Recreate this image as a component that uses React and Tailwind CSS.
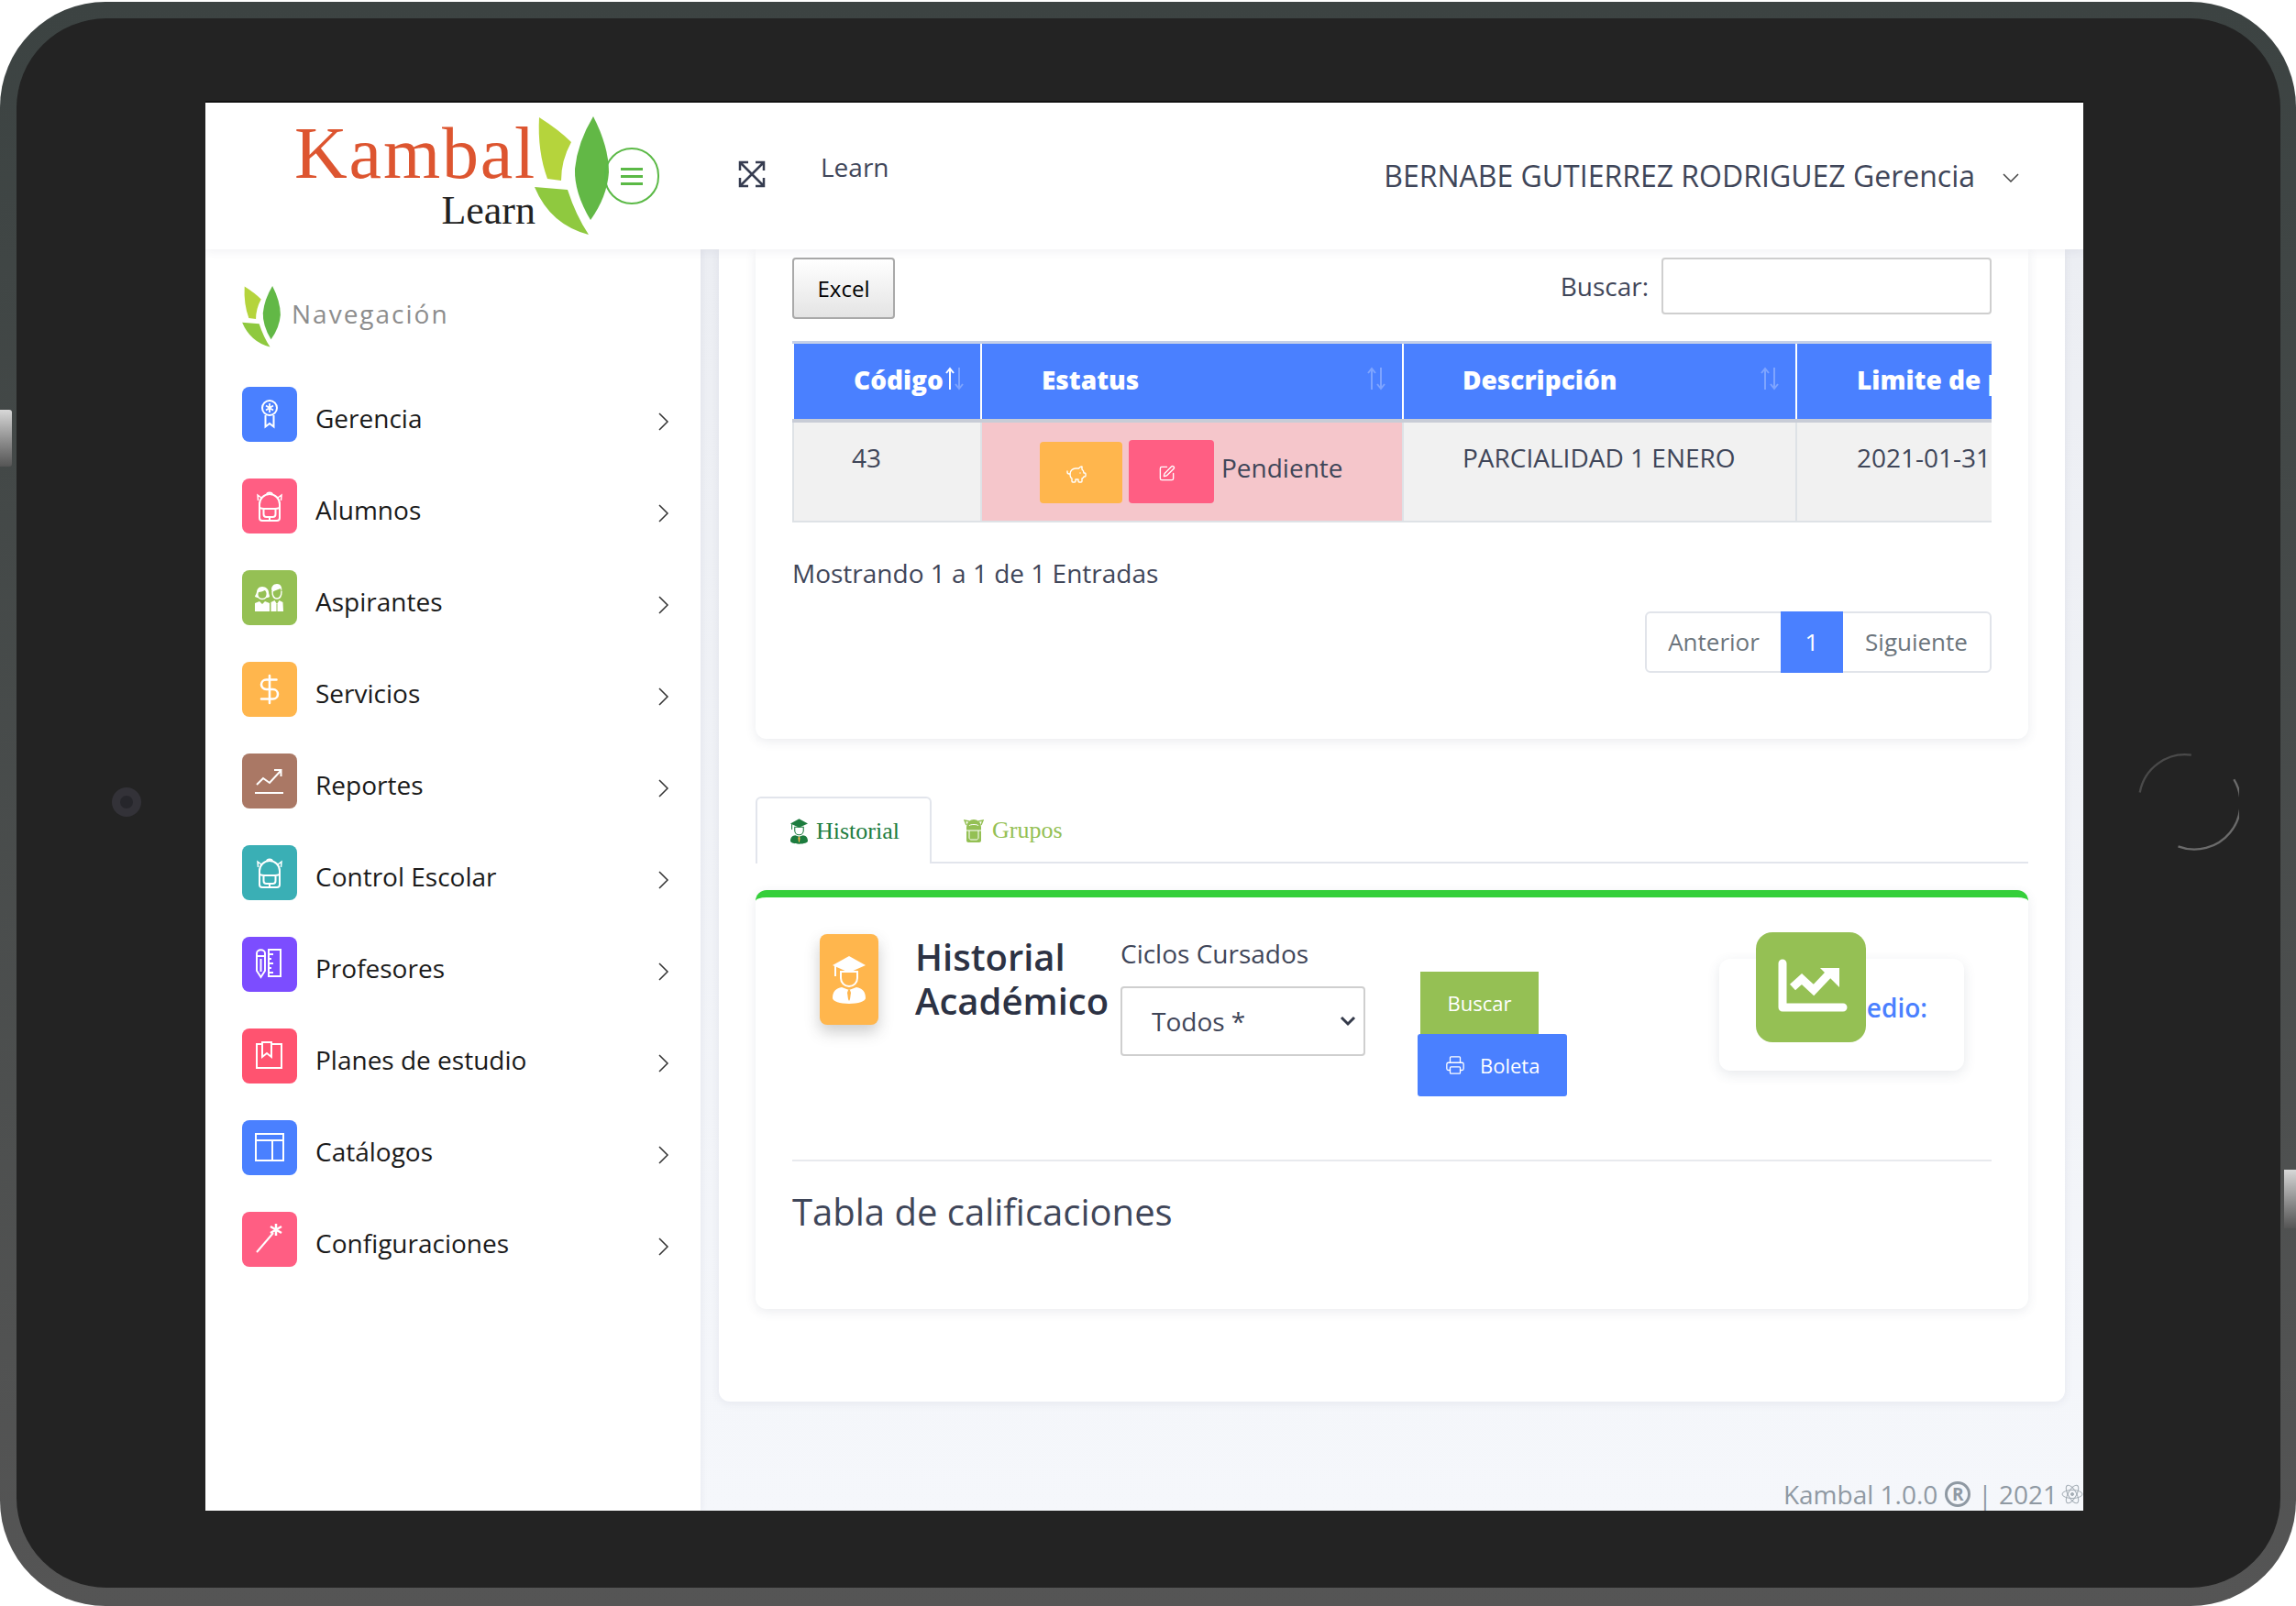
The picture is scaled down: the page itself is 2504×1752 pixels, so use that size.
import React from "react";
import { DollarSign, PiggyBank, SquarePen, Printer } from "lucide-react";

const Leaves = ({ className }) => (
  <svg viewBox="583 127 81 130" className={className}>
    <path d="M588 128 Q610 142 623 155 Q612 175 612 197 L597 195 Q586 165 588 128Z" fill="#b5d43c" />
    <path d="M647 127 Q664 160 664 188 Q662 215 644 240 Q626 210 627 184 Q630 155 647 127Z" fill="#62b846" />
    <path d="M583 204 L619 207 Q628 235 642 256 Q600 245 583 204Z" fill="#8fc93f" />
  </svg>
);

const Medal = () => (
  <svg viewBox="0 0 60 60" className="w-[60px] h-[60px]" fill="none" stroke="white" strokeWidth="2">
    <circle cx="30" cy="23" r="8" />
    <path d="M30 18v10M26 20.500l8 5M34 20.500l-8 5" strokeWidth="1.800" />
    <path d="M25.500 31v12.500l4.500-3.500 4.500 3.500V31" />
  </svg>
);

const Backpack = () => (
  <svg viewBox="0 0 60 60" className="w-[60px] h-[60px]" fill="none" stroke="white" strokeWidth="2">
    <path d="M19 43V28c0-6 5-11 11-11s11 5 11 11v15c0 2-1 3-3 3H22c-2 0-3-1-3-3Z" />
    <path d="M19 32c3 1 5 1 5 1h12s2 0 5-1M23.500 33v6c0 2 1 3 3 3h7c2 0 3-1 3-3v-6M30 46v-4" />
    <path d="M21 21l-4-3 .5 6M39 21l4-3-.5 6M27 17c0-2.500 6-2.500 6 0" strokeWidth="1.500" />
  </svg>
);

const People = () => (
  <svg viewBox="0 0 60 60" className="w-[60px] h-[60px]" fill="white">
    <path d="M22 18c-4 0-6 3-6 6 0 2-2 3-2 5 2 1 3 1 4 1-1-2-1-4 0-6 2 0 6-1 8-3 1 3 1 6 0 9 1 0 3 0 4-1 0-2-1-3-1-5 0-3-3-6-7-6Z" />
    <circle cx="22" cy="26" r="5.500" fill="none" stroke="white" strokeWidth="1.400" />
    <path d="M14 45V36l5-2 3 3 3-3 5 2v9Z" />
    <path d="M38 15c-4 0-6 3-6 6l1 3c2-2 7-3 9-4l1 4c1-4 0-9-5-9Z" />
    <path d="M33 23c0 5 2 8 5 8s5-3 5-8" fill="none" stroke="white" strokeWidth="1.400" />
    <path d="M31.500 45V35l4-2 2.500 4 2.500-4 4 2 .5 10Z" />
    <path d="M38 37v8" stroke="#95c054" strokeWidth="1" />
  </svg>
);

const Dollar = () => <DollarSign size={36} strokeWidth={1.7} color="white" />;

const Trend = () => (
  <svg viewBox="0 0 60 60" className="w-[60px] h-[60px]" fill="none" stroke="white" strokeWidth="2">
    <path d="M16 34l7-7 7 5 12-13M35 18h7.500v7" />
    <path d="M14 43h31" />
  </svg>
);

const Pencil = () => (
  <svg viewBox="0 0 60 60" className="w-[60px] h-[60px]" fill="none" stroke="white" strokeWidth="2">
    <path d="M16 18c0-5 9-5 9 0v19l-4.500 7-4.500-7ZM16 21h9M20.500 24v14" />
    <path d="M29 14h13v29H29ZM29 19h5M29 24h3M29 29h5M29 34h3M29 39h5" />
  </svg>
);

const Book = () => (
  <svg viewBox="0 0 60 60" className="w-[60px] h-[60px]" fill="none" stroke="white" strokeWidth="2">
    <path d="M22 17h-6v26h27V17h-11" />
    <path d="M22 15h10v16l-5-4-5 4Z" />
  </svg>
);

const Layout = () => (
  <svg viewBox="0 0 60 60" className="w-[60px] h-[60px]" fill="none" stroke="white" strokeWidth="2">
    <path d="M15 15h30v29H15ZM15 22h30M33 22v22" />
  </svg>
);

const Wand = () => (
  <svg viewBox="0 0 60 60" className="w-[60px] h-[60px]" fill="none" stroke="white" strokeWidth="2">
    <path d="M16 44l18-21" />
    <path d="M37 13v13M31 16l12 7M43 16l-12 7" strokeWidth="2.500" />
  </svg>
);

const Student = ({ className }) => (
  <svg viewBox="0 0 36 52" className={className} fill="currentColor">
    <path d="M18 0l18 10-18 8L0 10Z" />
    <rect x="2" y="11" width="2" height="11" />
    <path d="M9 17h18v7c0 5-4 9-9 9s-9-4-9-9Z" fill="none" stroke="currentColor" strokeWidth="2" />
    <path d="M10 34l8 3 8-3c6 1 10 4 10 12 0 3-8 6-18 6S0 49 0 46c0-8 4-11 10-12Z" />
    <path d="M17 37h2l1 3-1 7-1 2-1-2-1-7Z" fill="#ffb64d" />
  </svg>
);

const menu = [
  { label: "Gerencia", bg: "bg-[#4a80ff]", Icon: Medal },
  { label: "Alumnos", bg: "bg-[#ff5e83]", Icon: Backpack },
  { label: "Aspirantes", bg: "bg-[#95c054]", Icon: People },
  { label: "Servicios", bg: "bg-[#ffb64d]", Icon: Dollar },
  { label: "Reportes", bg: "bg-[#aa7865]", Icon: Trend },
  { label: "Control Escolar", bg: "bg-[#3aafb5]", Icon: Backpack },
  { label: "Profesores", bg: "bg-[#7c4dff]", Icon: Pencil },
  { label: "Planes de estudio", bg: "bg-[#ff5370]", Icon: Book },
  { label: "Catálogos", bg: "bg-[#4a80ff]", Icon: Layout },
  { label: "Configuraciones", bg: "bg-[#ff5e83]", Icon: Wand },
];

const SortArrows = ({ active }) => (
  <svg viewBox="0 0 22 26" className="absolute top-[25px] right-[17px] w-[22px] h-[26px]" fill="none" strokeWidth="2">
    <path d="M6 25V2M2 7l4-5 4 5" stroke={active ? "#ffffff" : "#7ea4ff"} />
    <path d="M16 1v23M12 19l4 5 4-5" stroke="#7ea4ff" />
  </svg>
);

const Sidebar = () => (
  <aside className="w-[540px] shrink-0 bg-white pl-[40px] relative z-10 shadow-[2px_0_6px_rgba(60,70,100,0.06)]">
    <div className="flex items-center h-[67px] mt-[40px] mb-[43px]">
      <Leaves className="w-[42px] h-[67px]" />
      <span className="ml-[12px] -mt-[7px] text-[28px] tracking-[2px] text-[#8d8d8d]">Navegación</span>
    </div>
    <ul className="flex flex-col gap-[40px]">
      {menu.map(({ label, bg, Icon }) => (
        <li key={label} className="flex items-center h-[60px]">
          <div className={`w-[60px] h-[60px] rounded-[8px] flex items-center justify-center ${bg}`}>
            <Icon />
          </div>
          <span className="ml-[20px] mt-[7px] text-[28px] text-[#1a1a1a]">{label}</span>
          <svg viewBox="0 0 12 20" className="ml-auto mr-[34px] mt-[16px] w-[12px] h-[20px]" fill="none" stroke="#333" strokeWidth="1.500">
            <path d="M1 1l9 9-9 9" />
          </svg>
        </li>
      ))}
    </ul>
  </aside>
);

const Header = () => (
  <header className="h-[160px] shrink-0 bg-white flex items-center relative z-20 shadow-[0_2px_10px_rgba(60,70,100,0.08)]">
    <div className="w-[360px] pl-[97px] self-start pt-[14px] text-right shrink-0" style={{ fontFamily: "'Liberation Serif', serif" }}>
      <div className="text-[80px] leading-[82px] tracking-[1.8px] text-[#dd5530] font-normal">Kambal</div>
      <div className="text-[44px] leading-[44px] text-[#222]">Learn</div>
    </div>
    <Leaves className="w-[81px] h-[130px] -ml-px self-start mt-[15px] shrink-0" />
    <button className="w-[60px] h-[62px] -ml-[5px] rounded-full border-2 border-[#5bb946] flex flex-col items-center justify-center gap-[5px] shrink-0">
      <span className="block w-[24px] h-[3px] bg-[#5bb946]" />
      <span className="block w-[24px] h-[3px] bg-[#5bb946]" />
      <span className="block w-[24px] h-[3px] bg-[#5bb946]" />
    </button>
    <svg viewBox="0 0 30 30" className="ml-[86px] -mt-[4px] w-[30px] h-[30px] shrink-0" fill="none" stroke="#363c50" strokeWidth="2.500">
      <path d="M2 11V2h9M19 2h9v9M28 19v9h-9M11 28H2v-9M2 2l26 26M28 2L2 28" />
    </svg>
    <span className="ml-[60px] -mt-[20px] text-[28px] text-[#3f4659]">Learn</span>
    <span className="ml-auto text-[32px] text-[#3f4659]">BERNABE GUTIERREZ RODRIGUEZ Gerencia</span>
    <svg viewBox="0 0 18 10" className="ml-[30px] mr-[70px] mt-[4px] w-[18px] h-[10px] shrink-0" fill="none" stroke="#444" strokeWidth="1.500">
      <path d="M1 1l8 8 8-8" />
    </svg>
  </header>
);

const TopCard = () => (
  <section className="h-[534px] bg-white rounded-b-[12px] px-[40px] pt-[9px] shadow-[0_3px_12px_rgba(60,70,100,0.1)]">
    <div className="flex items-start justify-between">
      <button className="w-[112px] h-[67px] border-2 border-[#a9a9a9] rounded-[4px] bg-gradient-to-b from-white to-[#e4e4e4] text-[24px] text-black">
        Excel
      </button>
      <label className="flex items-center h-[62px] text-[28px] text-[#3f4659]">
        Buscar:
        <input className="ml-[14px] w-[360px] h-[62px] border-2 border-[#cfcfcf] rounded-[4px] bg-white" />
      </label>
    </div>
    <div className="mt-[24px] overflow-hidden">
      <table className="w-[1500px] table-fixed border-collapse text-[28px] text-[#3f4659]">
        <colgroup>
          <col className="w-[205px]" />
          <col className="w-[460px]" />
          <col className="w-[429px]" />
          <col />
        </colgroup>
        <thead>
          <tr className="h-[85px] bg-[#4a80ff] text-white border-t-[3px] border-t-[#c5d0e8] border-b-[4px] border-b-[#c8ccd6]">
            <th className="relative text-left font-extrabold pl-[65px] pb-[3px] whitespace-nowrap border-2 border-y-0 border-white/80">
              Código
              <SortArrows active />
            </th>
            <th className="relative text-left font-extrabold pl-[65px] pb-[3px] border-2 border-y-0 border-white/80">
              Estatus
              <SortArrows />
            </th>
            <th className="relative text-left font-extrabold pl-[64px] pb-[3px] border-2 border-y-0 border-white/80">
              Descripción
              <SortArrows />
            </th>
            <th className="relative text-left font-extrabold pl-[65px] pb-[3px] whitespace-nowrap border-2 border-y-0 border-white/80">Limite de pago</th>
          </tr>
        </thead>
        <tbody>
          <tr className="h-[110px] bg-[#f1f1f1] border-b-2 border-[#dee2e6]">
            <td className="align-top pl-[63px] pt-[17px] border-2 border-y-0 border-[#dee2e6]">43</td>
            <td className="bg-[#f5c6cb] pl-[63px] border-2 border-y-0 border-[#dee2e6]">
              <div className="flex items-end h-[69px]">
                <button className="w-[90px] h-[67px] rounded-[4px] bg-[#ffb64d] flex items-center justify-start pl-[28px] pt-[6px]">
                  <PiggyBank size={24} strokeWidth={1.4} color="white" />
                </button>
                <button className="ml-[7px] w-[93px] h-[69px] rounded-[4px] bg-[#ff5e83] flex items-center justify-start pl-[32px] pt-[4px]">
                  <SquarePen size={19} strokeWidth={1.7} color="white" />
                </button>
                <span className="ml-[8px] -mt-[8px] self-center">Pendiente</span>
              </div>
            </td>
            <td className="align-top pl-[64px] pt-[17px] border-2 border-y-0 border-[#dee2e6]">PARCIALIDAD 1 ENERO</td>
            <td className="align-top pl-[65px] pt-[17px] border-2 border-y-0 border-[#dee2e6]">2021-01-31</td>
          </tr>
        </tbody>
      </table>
    </div>
    <p className="mt-[34px] text-[28px] leading-[42px] text-[#3f4659]">Mostrando 1 a 1 de 1 Entradas</p>
    <div className="mt-[21px] flex justify-end">
      <div className="flex h-[67px] border-2 border-[#e1e4ea] rounded-[6px] text-[26px] text-[#6c757d]">
        <span className="w-[146px] flex items-center justify-center">Anterior</span>
        <span className="w-[68px] -my-[2px] flex items-center justify-center bg-[#4a80ff] text-white">1</span>
        <span className="w-[160px] flex items-center justify-center">Siguiente</span>
      </div>
    </div>
  </section>
);

const Tabs = () => (
  <div className="mt-[63px] h-[73px] flex border-b-2 border-[#e2e5ec] text-[26px]" style={{ fontFamily: "'Liberation Serif', serif" }}>
    <div className="w-[192px] h-[73px] border-2 border-b-0 border-[#e2e5ec] rounded-t-[6px] bg-white flex items-center pl-[36px] text-[#1c7c3e]">
      <Student className="w-[19px] h-[28px]" />
      <span className="ml-[9px]">Historial</span>
    </div>
    <div className="flex items-center pl-[35px] pt-[2px] text-[#94c054]">
      <svg viewBox="0 0 22 28" className="w-[22px] h-[28px]" fill="none">
        <path d="M3 25V11C3 5 7 2 11 2s8 3 8 9v14c0 1-1 2-2 2H5c-1 0-2-1-2-2Z" fill="currentColor" />
        <path d="M3 8L1 3l5 1M19 8l2-5-5 1" stroke="currentColor" strokeWidth="1.400" />
        <path d="M3 14h16M6 14v8c0 1 1 2 2 2h6c1 0 2-1 2-2v-8M6 9c0-2 10-2 10 0" stroke="white" strokeWidth="1" />
      </svg>
      <span className="ml-[9px]">Grupos</span>
    </div>
  </div>
);

const HistoryCard = () => (
  <section className="mt-[29px] h-[457px] bg-white border-t-[8px] border-t-[#35cf3a] rounded-[12px] px-[40px] shadow-[0_3px_12px_rgba(60,70,100,0.1)]">
    <div className="h-[286px] flex items-start">
      <div className="ml-[30px] mt-[40px] w-[64px] h-[99px] rounded-[8px] bg-[#ffb64d] flex items-center justify-center text-white shadow-[0_8px_16px_rgba(60,60,60,0.25)] shrink-0">
        <Student className="w-[36px] h-[52px]" />
      </div>
      <h2 className="ml-[40px] mt-[41px] w-[224px] text-[40px] leading-[48px] font-semibold text-[#2c3244] shrink-0">
        Historial Académico
      </h2>
      <div className="mt-[40px] w-[267px] shrink-0">
        <p className="text-[28px] leading-[42px] text-[#3f4659]">Ciclos Cursados</p>
        <div className="relative mt-[15px]">
          <select className="w-[267px] h-[76px] border-2 border-[#cfcfcf] rounded-[4px] bg-white pl-[32px] text-[28px] text-[#3f4659] appearance-none">
            <option>Todos *</option>
          </select>
          <svg viewBox="0 0 18 12" className="absolute right-[10px] top-[32px] w-[18px] h-[12px] pointer-events-none" fill="none" stroke="#343a4a" strokeWidth="3">
            <path d="M2 2l7 7 7-7" />
          </svg>
        </div>
      </div>
      <div className="ml-[57px] mt-[81px] flex flex-col shrink-0 text-[22px] text-white">
        <button className="ml-[3px] w-[129px] h-[68px] bg-[#95c054]">Buscar</button>
        <button className="w-[163px] h-[68px] rounded-[3px] bg-[#4a80ff] flex items-center pl-[30px]">
          <Printer size={22} strokeWidth={1.4} />
          <span className="ml-[16px]">Boleta</span>
        </button>
      </div>
      <div className="relative ml-auto mr-[30px] mt-[67px] w-[267px] h-[122px] rounded-[12px] bg-white shadow-[0_4px_14px_rgba(60,70,100,0.12)] flex items-center justify-end pr-[40px] pb-[16px] text-[28px] font-semibold text-[#4a80ff] shrink-0">
        Promedio:
        <div className="absolute left-[40px] -top-[29px] w-[120px] h-[120px] rounded-[18px] bg-[#95c054]">
          <svg viewBox="0 0 120 120" className="w-[120px] h-[120px]">
            <path d="M29 34v48h66" fill="none" stroke="white" strokeWidth="9" strokeLinejoin="round" strokeLinecap="round" />
            <path d="M40 60l10-9 13 12 19-20" fill="none" stroke="white" strokeWidth="9" />
            <path d="M70 39h21v21Z" fill="white" />
          </svg>
        </div>
      </div>
    </div>
    <hr className="border-t-2 border-[#e8eaee]" />
    <h3 className="mt-[31px] text-[40px] leading-[48px] font-normal text-[#3f4659]">Tabla de calificaciones</h3>
  </section>
);

const Footer = () => (
  <footer className="mt-auto -mr-[20px] flex items-center justify-end h-[36px] text-[28px] text-[#8f99a3]">
    Kambal 1.0.0
    <span className="ml-[8px] w-[28px] h-[28px] rounded-full border-[3px] border-[#8f99a3] flex items-center justify-center text-[19px] font-bold">R</span>
    <span className="ml-[8px]">| 2021</span>
    <svg viewBox="0 0 24 24" className="ml-[4px] w-[24px] h-[24px]" fill="none" stroke="#a4adb5" strokeWidth="1">
      <ellipse cx="12" cy="12" rx="11" ry="4.500" />
      <ellipse cx="12" cy="12" rx="11" ry="4.500" transform="rotate(60 12 12)" />
      <ellipse cx="12" cy="12" rx="11" ry="4.500" transform="rotate(120 12 12)" />
      <circle cx="12" cy="12" r="1.500" fill="#a4adb5" />
    </svg>
  </footer>
);

export default function App() {
  return (
    <div className="w-[2504px] h-[1752px] bg-white pt-[2px] overflow-hidden" style={{ fontFamily: "'Open Sans', sans-serif" }}>
      <div className="relative h-[1750px] rounded-[115px] bg-gradient-to-b from-[#3c4342] to-[#555555] pt-[18px] pb-[20px] pl-[18px] pr-[17px]">
        <div className="h-full rounded-[98px] bg-[#232323] pt-[92px] pl-[206px]">
          <div className="w-[2048px] h-[1536px] flex flex-col overflow-hidden shadow-[0_-2px_0_#111]">
            <Header />
            <div className="flex-1 flex min-h-0">
              <Sidebar />
              <main className="flex-1 min-w-0 flex flex-col px-[20px] bg-gradient-to-b from-[#eceef3] to-[#f5f7fb]">
                <div className="h-[1257px] shrink-0 bg-white rounded-b-[12px] px-[40px] shadow-[0_2px_10px_rgba(60,70,100,0.08)]">
                  <TopCard />
                  <Tabs />
                  <HistoryCard />
                </div>
                <Footer />
              </main>
            </div>
          </div>
        </div>
        {/* side buttons, camera and home ring sit on top of the bezel */}
        <div className="absolute left-0 top-[445px] w-[13px] h-[62px] rounded-r-[3px] bg-gradient-to-b from-[#d8d8d8] to-[#555555]" />
        <div className="absolute right-0 top-[1274px] w-[13px] h-[64px] bg-gradient-to-b from-[#d8d8d8] to-[#555555]" />
        <div className="absolute left-[122px] top-[857px] w-[32px] h-[32px] rounded-full bg-[#333238] flex items-center justify-center">
          <div className="w-[14px] h-[14px] rounded-full bg-[#26262b]" />
        </div>
        <svg viewBox="0 0 120 120" className="absolute left-[2328px] top-[815px] w-[114px] h-[114px]" fill="none">
          <path d="M114 35A53 53 0 0 1 50 112" stroke="#6b6b6b" strokeWidth="2.500" />
          <path d="M6 50A53 53 0 0 1 65 7" stroke="#4a4a4a" strokeWidth="2.500" />
        </svg>
      </div>
    </div>
  );
}
